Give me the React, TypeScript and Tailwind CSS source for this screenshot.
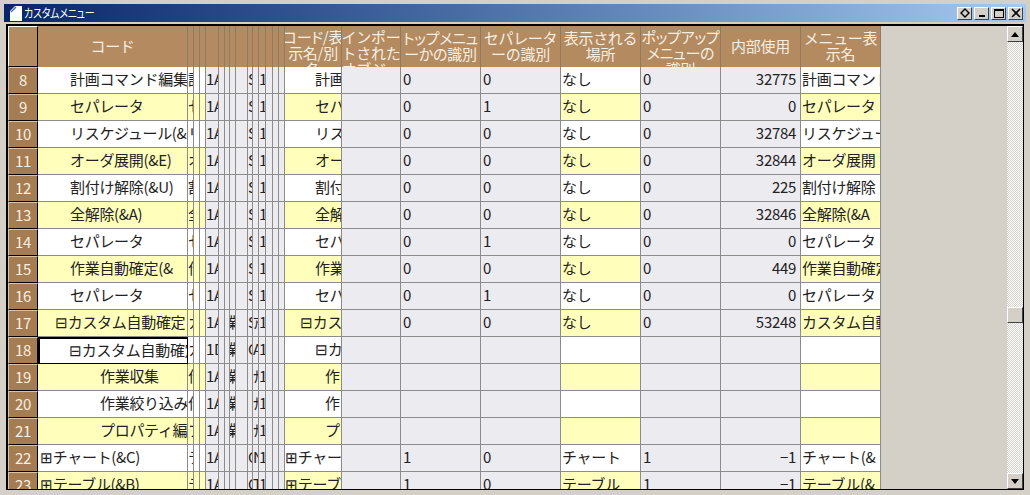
const cols =
  "grid grid-cols-[30px_150px_6px_6px_6px_13px_6px_5px_6px_12px_5px_6px_7px_7px_6px_6px_57px_59px_80px_80px_80px_80px_80px_80px]";

// one row of the custom menu table
const rows = [
  { no: 8, pad: "pl-[32px]", code: "計画コマンド編集(&", c0: "計", kind: "1A", gyo: "", s1: "S", s2: "", name: "計画", namePad: "pl-[30px]", top: "0", sep: "0", place: "なし", pop: "0", num: "32775", menu: "計画コマンド" },
  { no: 9, pad: "pl-[32px]", code: "セパレータ", c0: "セ", kind: "1A", gyo: "", s1: "S", s2: "", name: "セパ", namePad: "pl-[30px]", top: "0", sep: "1", place: "なし", pop: "0", num: "0", menu: "セパレータ" },
  { no: 10, pad: "pl-[32px]", code: "リスケジュール(&R)", c0: "リ", kind: "1A", gyo: "", s1: "S", s2: "", name: "リス", namePad: "pl-[30px]", top: "0", sep: "0", place: "なし", pop: "0", num: "32784", menu: "リスケジュール" },
  { no: 11, pad: "pl-[32px]", code: "オーダ展開(&E)", c0: "オ", kind: "1A", gyo: "", s1: "S", s2: "", name: "オー", namePad: "pl-[30px]", top: "0", sep: "0", place: "なし", pop: "0", num: "32844", menu: "オーダ展開" },
  { no: 12, pad: "pl-[32px]", code: "割付け解除(&U)", c0: "割", kind: "1A", gyo: "", s1: "S", s2: "", name: "割付", namePad: "pl-[30px]", top: "0", sep: "0", place: "なし", pop: "0", num: "225", menu: "割付け解除" },
  { no: 13, pad: "pl-[32px]", code: "全解除(&A)", c0: "全", kind: "1A", gyo: "", s1: "S", s2: "", name: "全解", namePad: "pl-[30px]", top: "0", sep: "0", place: "なし", pop: "0", num: "32846", menu: "全解除(&A" },
  { no: 14, pad: "pl-[32px]", code: "セパレータ", c0: "セ", kind: "1A", gyo: "", s1: "S", s2: "", name: "セパ", namePad: "pl-[30px]", top: "0", sep: "1", place: "なし", pop: "0", num: "0", menu: "セパレータ" },
  { no: 15, pad: "pl-[32px]", code: "作業自動確定(&", c0: "作", kind: "1A", gyo: "", s1: "S", s2: "", name: "作業", namePad: "pl-[30px]", top: "0", sep: "0", place: "なし", pop: "0", num: "449", menu: "作業自動確定" },
  { no: 16, pad: "pl-[32px]", code: "セパレータ", c0: "セ", kind: "1A", gyo: "", s1: "S", s2: "", name: "セパ", namePad: "pl-[30px]", top: "0", sep: "1", place: "なし", pop: "0", num: "0", menu: "セパレータ" },
  { no: 17, pad: "pl-[17px]", code: "⊟カスタム自動確定", c0: "カ", kind: "1A", gyo: "業", s1: "S", s2: "ｱ", name: "⊟カス", namePad: "pl-[15px]", top: "0", sep: "0", place: "なし", pop: "0", num: "53248", menu: "カスタム自動" },
  { no: 18, pad: "pl-[29px]", code: "⊟カスタム自動確定", c0: "カ", kind: "1D", gyo: "業", s1: "C", s2: "A", name: "⊟カ", namePad: "pl-[30px]", top: "", sep: "", place: "", pop: "", num: "", menu: "", selected: true },
  { no: 19, pad: "pl-[62px]", code: "作業収集", c0: "作", kind: "1A", gyo: "業", s1: "", s2: "ﾅ", name: "作", namePad: "pl-[40px]", top: "", sep: "", place: "", pop: "", num: "", menu: "" },
  { no: 20, pad: "pl-[62px]", code: "作業絞り込み", c0: "作", kind: "1A", gyo: "業", s1: "", s2: "ﾅ", name: "作", namePad: "pl-[40px]", top: "", sep: "", place: "", pop: "", num: "", menu: "" },
  { no: 21, pad: "pl-[62px]", code: "プロパティ編集", c0: "プ", kind: "1A", gyo: "業", s1: "", s2: "ﾅ", name: "プ", namePad: "pl-[40px]", top: "", sep: "", place: "", pop: "", num: "", menu: "" },
  { no: 22, pad: "pl-[2px]", code: "⊞チャート(&C)", c0: "テ", kind: "1A", gyo: "", s1: "C", s2: "N", name: "⊞チャート", namePad: "pl-0", top: "1", sep: "0", place: "チャート", pop: "1", num: "−1", menu: "チャート(&" },
  { no: 23, pad: "pl-[2px]", code: "⊞テーブル(&B)", c0: "テ", kind: "1A", gyo: "", s1: "C", s2: "T", name: "⊞テーブル", namePad: "pl-0", top: "1", sep: "0", place: "テーブル", pop: "1", num: "−1", menu: "テーブル(&" },
];

const headers = [
  { lines: ["コード/表", "示名/別", "名"], narrow: true },
  { lines: ["インポー", "トされた", "オブジェ"], narrow: false },
  { lines: ["トップメニュ", "ーかの識別"], narrow: true },
  { lines: ["セパレータ", "ーの識別"], narrow: false },
  { lines: ["表示される", "場所"], narrow: false },
  { lines: ["ポップアップ", "メニューの", "識別"], narrow: true },
  { lines: ["内部使用"], narrow: false },
  { lines: ["メニュー表", "示名"], narrow: false },
];

function HeadCell({ lines, narrow }: { lines: string[]; narrow: boolean }) {
  return (
    <div className={`flex flex-col items-center justify-center overflow-hidden border-r border-[#8f7a64] bg-[#b48a60] pb-px ${narrow ? "[font-feature-settings:'palt']" : ""}`}>
      <div className={lines.length > 2 ? "mt-[14px]" : ""}>
        {lines.map((l) => (
          <div key={l} className="text-center leading-[16px] whitespace-nowrap text-[#f5efe2]">
            {l}
          </div>
        ))}
      </div>
    </div>
  );
}

function Cell({ bg, children, className = "" }: { bg: string; children?: React.ReactNode; className?: string }) {
  return (
    <div className={`flex items-center overflow-hidden whitespace-nowrap border-r border-b border-[#8c8c8c] pb-[2px] ${bg} ${className}`}>
      {children}
    </div>
  );
}

function TitleBar() {
  return (
    <div className="flex h-[18px] items-center bg-gradient-to-r from-[#0a246a] to-[#a6caf0] pl-[6px] pr-[3px]">
      <svg width="12" height="15" viewBox="0 0 12 15" className="mr-[2px]">
        <path d="M0 15V5L5 0h7v15z" fill="#fff" />
        <path d="M1 6L6 1" stroke="#3a6ec0" strokeWidth="1.5" />
      </svg>
      <span className="inline-block origin-left scale-x-[0.83] text-[12px] leading-none text-white [font-feature-settings:'palt']">カスタムメニュー</span>
      <div className="ml-auto flex items-center gap-[2px]">
        <WinBtn>
          <svg width="10" height="10" viewBox="0 0 10 10">
            <path d="M5 1l4 4-4 4-4-4z" fill="none" stroke="#000" strokeWidth="1.4" />
          </svg>
        </WinBtn>
        <WinBtn>
          <div className="mt-[6px] h-[2px] w-[6px] bg-black" />
        </WinBtn>
        <WinBtn>
          <div className="h-[9px] w-[10px] border border-t-2 border-black" />
        </WinBtn>
        <WinBtn>
          <svg width="10" height="10" viewBox="0 0 10 10">
            <path d="M1 1l8 8M9 1l-8 8" stroke="#000" strokeWidth="1.6" />
          </svg>
        </WinBtn>
      </div>
    </div>
  );
}

function WinBtn({ children }: { children: React.ReactNode }) {
  return (
    <div className="flex h-[13px] w-[15px] items-center justify-center border border-t-white border-l-white border-r-[#404040] border-b-[#404040] bg-[#d4d0c8]">
      {children}
    </div>
  );
}

function ScrollBtn({ dir }: { dir: "up" | "down" }) {
  return (
    <div className="flex h-[16px] shrink-0 items-center justify-center border border-t-white border-l-white border-r-[#404040] border-b-[#404040] bg-[#d4d0c8]">
      <svg width="8" height="5" viewBox="0 0 8 5">
        <path d={dir === "up" ? "M4 0l4 5H0z" : "M0 0h8L4 5z"} fill="#000" />
      </svg>
    </div>
  );
}

function ScrollBar() {
  const track =
    "bg-[repeating-conic-gradient(#d4d0c8_0_25%,#ffffff_0_50%)] bg-[length:2px_2px]";
  return (
    <div className="flex w-[16px] shrink-0 flex-col">
      <ScrollBtn dir="up" />
      <div className={`h-[265px] ${track}`} />
      <div className="h-[16px] shrink-0 border border-t-white border-l-white border-r-[#404040] border-b-[#404040] bg-[#d4d0c8]" />
      <div className={`flex-1 ${track}`} />
      <ScrollBtn dir="down" />
    </div>
  );
}

export default function App() {
  return (
    <div className="flex h-[495px] w-[1030px] flex-col overflow-hidden bg-[#d4d0c8] px-[4px] pt-[4px] font-['Noto_Sans_CJK_JP',sans-serif] text-[15px] tracking-[-0.3px] text-[#222]">
      <TitleBar />
      <div className="mx-[2px] mt-[2px] flex h-[466px] shrink-0 border-t-2 border-b border-l-2 border-r border-black bg-[#d4d0c8]">
        <div className="flex-1 overflow-hidden">
          <div className={`${cols} h-[41px] w-[873px]`}>
            <div className="border border-t-white border-l-white border-r-black border-b-black bg-[#b48a60]" />
            <div className="flex items-center justify-center border-r border-[#8f7a64] bg-[#b48a60] text-[#f5efe2]">コード</div>
            {Array.from({ length: 14 }).map((_, i) => (
              <div key={i} className="border-r border-[#8f7a64] bg-[#b48a60]" />
            ))}
            {headers.map((h) => (
              <HeadCell key={h.lines[0]} lines={h.lines} narrow={h.narrow} />
            ))}
          </div>
          {rows.map((r) => {
            const alt = r.no % 2 === 0 ? "bg-white" : "bg-[#ffffbb]";
            const lav = "bg-[#ecebf0]";
            return (
              <div key={r.no} className={`${cols} h-[27px] w-[873px]`}>
                <div className="flex items-center justify-center border border-t-[#d9c2a6] border-l-[#d9c2a6] border-r-black border-b-black bg-[#a67c52] text-[#f5efe2]">
                  {r.no}
                </div>
                {r.selected ? (
                  <Cell bg="bg-white" className={`border-2 border-black ${r.pad}`}>{r.code}</Cell>
                ) : (
                  <Cell bg={alt} className={r.pad}>{r.code}</Cell>
                )}
                <Cell bg={alt}>{r.c0}</Cell>
                <Cell bg={alt} />
                <Cell bg={alt} />
                <Cell bg={lav}>{r.kind}</Cell>
                <Cell bg={lav} />
                <Cell bg={lav} />
                <Cell bg={lav} className="justify-center">{r.gyo}</Cell>
                <Cell bg={lav} />
                <Cell bg={lav}>{r.s1}</Cell>
                <Cell bg={lav}>{r.s2}</Cell>
                <Cell bg={lav}>1</Cell>
                <Cell bg={lav} />
                <Cell bg={lav} />
                <Cell bg={lav} />
                <Cell bg={alt} className={r.namePad}>{r.name}</Cell>
                <Cell bg={lav} />
                <Cell bg={lav} className="pl-[2px]">{r.top}</Cell>
                <Cell bg={lav} className="pl-[2px]">{r.sep}</Cell>
                <Cell bg={alt} className="pl-px">{r.place}</Cell>
                <Cell bg={lav} className="pl-[2px]">{r.pop}</Cell>
                <Cell bg={lav} className="justify-end pr-[4px]">{r.num}</Cell>
                <Cell bg={alt} className="pl-px">{r.menu}</Cell>
              </div>
            );
          })}
        </div>
        <ScrollBar />
      </div>
    </div>
  );
}
